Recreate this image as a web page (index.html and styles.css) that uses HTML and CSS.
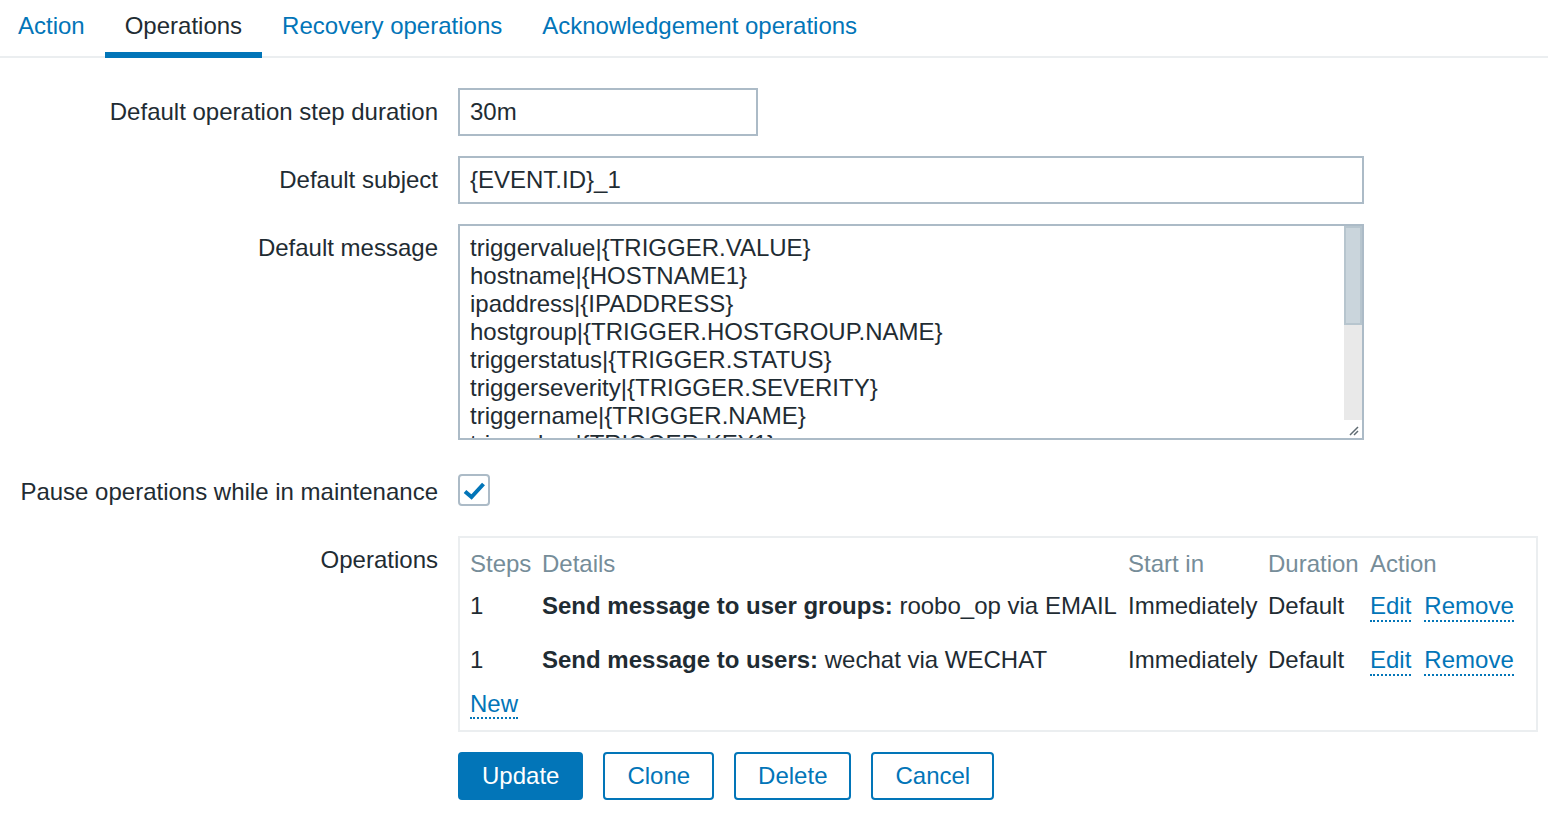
FILE: index.html
```html
<!DOCTYPE html>
<html lang="en">
<head>
<meta charset="utf-8">
<title>Action operations</title>
<link rel="stylesheet" href="styles.css">
</head>
<body>
<ul class="tabs">
  <li class="tab"><a href="#">Action</a></li>
  <li class="tab active"><a href="#">Operations</a></li>
  <li class="tab"><a href="#">Recovery operations</a></li>
  <li class="tab"><a href="#">Acknowledgement operations</a></li>
</ul>

<form class="form">
  <div class="label">Default operation step duration</div>
  <div class="field"><input class="input input-short" type="text" value="30m"></div>

  <div class="label">Default subject</div>
  <div class="field"><input class="input input-wide" type="text" value="{EVENT.ID}_1"></div>

  <div class="label">Default message</div>
  <div class="field field-textarea">
    <div class="textarea">
      <div class="textarea-content">triggervalue|{TRIGGER.VALUE}
hostname|{HOSTNAME1}
ipaddress|{IPADDRESS}
hostgroup|{TRIGGER.HOSTGROUP.NAME}
triggerstatus|{TRIGGER.STATUS}
triggerseverity|{TRIGGER.SEVERITY}
triggername|{TRIGGER.NAME}
triggerkey|{TRIGGER.KEY1}</div>
      <div class="scrollbar">
        <div class="thumb"></div>
        <div class="track"></div>
        <div class="resizer">
          <svg width="18" height="18" viewBox="0 0 18 18"><path d="M6 15 L14 7 M10 15 L14 11" stroke="#5f6b72" stroke-width="1.5" fill="none"/></svg>
        </div>
      </div>
    </div>
  </div>

  <div class="label">Pause operations while in maintenance</div>
  <div class="field field-check">
    <span class="checkbox">
      <svg width="28" height="28" viewBox="0 0 28 28"><path d="M5 15.5 L11.5 21 L23.5 8" stroke="#0275b8" stroke-width="4" fill="none" stroke-linejoin="miter"/></svg>
    </span>
  </div>

  <div class="label">Operations</div>
  <div class="field">
    <div class="ops">
      <div class="ops-grid">
        <div class="th">Steps</div>
        <div class="th">Details</div>
        <div class="th">Start in</div>
        <div class="th">Duration</div>
        <div class="th">Action</div>

        <div class="td r1">1</div>
        <div class="td r1"><b>Send message to user groups:</b> roobo_op via EMAIL</div>
        <div class="td r1">Immediately</div>
        <div class="td r1">Default</div>
        <div class="td r1 actions"><a class="link" href="#">Edit</a><a class="link" href="#">Remove</a></div>

        <div class="td r2">1</div>
        <div class="td r2"><b>Send message to users:</b> wechat via WECHAT</div>
        <div class="td r2">Immediately</div>
        <div class="td r2">Default</div>
        <div class="td r2 actions"><a class="link" href="#">Edit</a><a class="link" href="#">Remove</a></div>
      </div>
      <div class="ops-new"><a class="link" href="#">New</a></div>
    </div>
  </div>

  <div class="label"></div>
  <div class="field buttons">
    <button type="button" class="btn btn-primary">Update</button>
    <button type="button" class="btn">Clone</button>
    <button type="button" class="btn">Delete</button>
    <button type="button" class="btn">Cancel</button>
  </div>
</form>
</body>
</html>
```

FILE: styles.css
```css
* { box-sizing: border-box; }

body {
  margin: 0;
  background: #ffffff;
  font-family: "Liberation Sans", Arial, sans-serif;
  font-size: 24px;
  line-height: 28px;
  color: #1f2c33;
}

.tabs {
  list-style: none;
  margin: 0;
  padding: 0;
  display: flex;
  border-bottom: 2px solid #ebeef0;
}

.tab {
  padding: 12px 20px 12px;
  margin-bottom: -2px;
  border-bottom: 6px solid transparent;
}

.tab:first-child { margin-left: -2px; }

.tab a {
  color: #0275b8;
  text-decoration: none;
}

.tab.active { border-bottom-color: #0275b8; }
.tab.active a { color: #1f2c33; }

.form {
  display: grid;
  grid-template-columns: 438px 1fr;
  column-gap: 20px;
  row-gap: 20px;
  padding-top: 30px;
}

.label {
  text-align: right;
  padding-top: 10px;
  white-space: nowrap;
}

.field { min-width: 0; }

.input {
  display: block;
  height: 48px;
  border: 2px solid #acbbc7;
  border-radius: 0;
  padding: 0 10px;
  font-family: inherit;
  font-size: 24px;
  color: #1f2c33;
  background: #fff;
  outline: none;
}

.input-short { width: 300px; }
.input-wide { width: 906px; }

.field-textarea { margin-bottom: 8px; }

.textarea {
  display: flex;
  width: 906px;
  height: 216px;
  border: 2px solid #acbbc7;
  background: #fff;
}

.textarea-content {
  flex: 1;
  padding: 8px 10px 0;
  white-space: pre;
  overflow: hidden;
}

.scrollbar {
  width: 18px;
  display: flex;
  flex-direction: column;
  background: #e9e9e9;
}

.thumb {
  height: 99px;
  background: #cad5dc;
  border: 2px solid #b7c5ce;
}

.track { flex: 1; }

.resizer {
  height: 18px;
  background: #fff;
}

.resizer svg { display: block; }

.field-check { min-height: 48px; }

.checkbox {
  display: flex;
  align-items: center;
  justify-content: center;
  width: 32px;
  height: 32px;
  margin-top: 6px;
  border: 2px solid #acbbc7;
  border-radius: 4px;
  background: #fff;
}

.checkbox svg { display: block; }

.ops {
  width: 1080px;
  border: 2px solid #ebeef0;
  padding: 12px 10px 12px;
}

.ops-grid {
  display: grid;
  grid-template-columns: 72px 586px 140px 102px 1fr;
}

.th {
  color: #768d99;
  padding-bottom: 14px;
}

.td { white-space: nowrap; }
.td.r1 { padding-bottom: 24px; }
.td.r2 { padding-bottom: 14px; }

.td b { font-weight: bold; }

.actions {
  display: flex;
  gap: 13px;
}

.link {
  color: #0275b8;
  text-decoration: none;
  border-bottom: 2px dotted #0275b8;
}

.ops-new { line-height: 28px; }

.buttons {
  display: flex;
  gap: 20px;
}

.btn {
  height: 48px;
  padding: 0 22px;
  border: 2px solid #0275b8;
  border-radius: 4px;
  background: #fff;
  color: #0275b8;
  font-family: inherit;
  font-size: 24px;
  line-height: 28px;
  cursor: pointer;
}

.btn-primary {
  background: #0275b8;
  color: #fff;
}
```
